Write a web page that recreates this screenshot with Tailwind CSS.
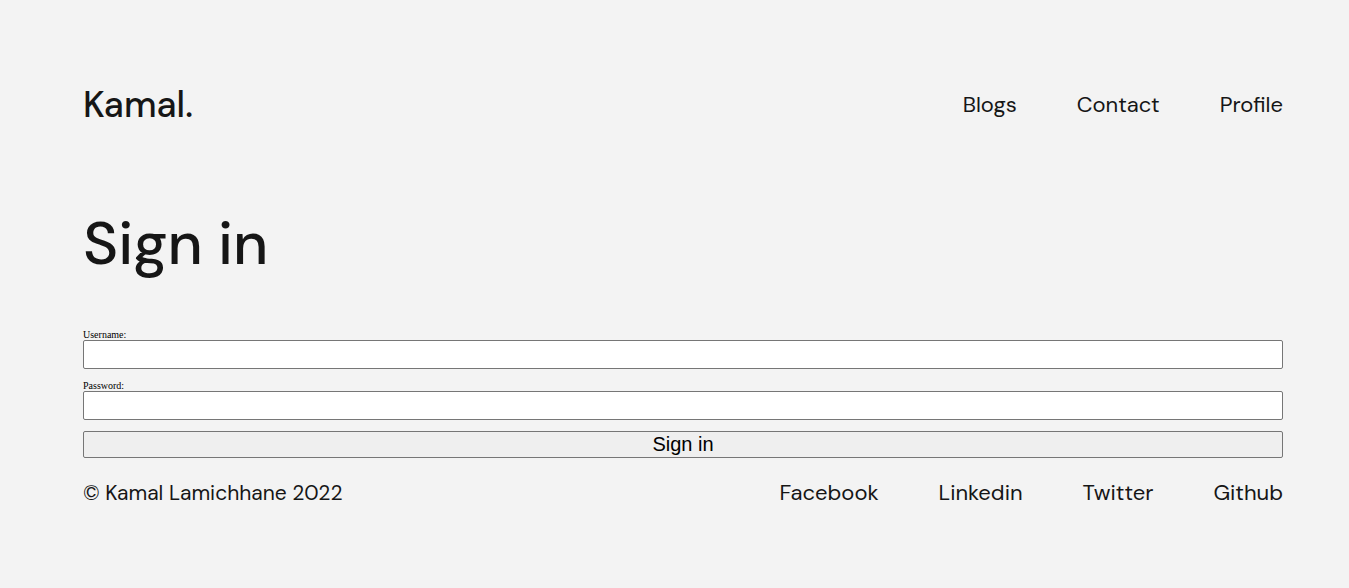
<!DOCTYPE html>
<html lang="en">
<head>
<meta charset="utf-8">
<meta name="viewport" content="width=device-width, initial-scale=1">
<title>Sign in</title>
<script src="https://cdn.jsdelivr.net/npm/@tailwindcss/browser@4"></script>
</head>
<body class="bg-[#f3f3f3] text-[#161616] font-['DM_Sans','Open_Sans',sans-serif]">
<div class="max-w-[1200px] ml-[83px] mr-[66px] pt-20">
  <header class="flex items-center justify-between">
    <a href="#" class="text-[36px] leading-[50px] font-medium">Kamal.</a>
    <nav class="flex gap-15 text-[22px] leading-7">
      <a href="#">Blogs</a>
      <a href="#">Contact</a>
      <a href="#">Profile</a>
    </nav>
  </header>
  <main>
    <h1 class="mt-18 text-[60px] leading-[84px] font-medium">Sign in</h1>
    <form class="mt-11 flex flex-col text-black">
      <label for="username" class="font-['Liberation_Serif',serif] text-[10px] leading-[10px]">Username:</label>
      <input id="username" type="text" class="h-[29px] rounded-[2px] border border-[#767676] bg-white px-1 text-[20px]">
      <label for="password" class="mt-3 font-['Liberation_Serif',serif] text-[10px] leading-[10px]">Password:</label>
      <input id="password" type="password" class="h-[29px] rounded-[2px] border border-[#767676] bg-white px-1 text-[20px]">
      <button type="submit" class="mt-[11px] h-[27px] rounded-[2px] border border-[#767676] bg-[#efefef] font-['Liberation_Sans',sans-serif] text-[20px] leading-[23px]">Sign in</button>
    </form>
  </main>
  <footer class="mt-[21px] flex items-center justify-between leading-7">
    <p class="text-[21px]">© Kamal Lamichhane 2022</p>
    <nav class="flex gap-15 text-[22px]">
      <a href="#">Facebook</a>
      <a href="#">Linkedin</a>
      <a href="#">Twitter</a>
      <a href="#">Github</a>
    </nav>
  </footer>
</div>
</body>
</html>
